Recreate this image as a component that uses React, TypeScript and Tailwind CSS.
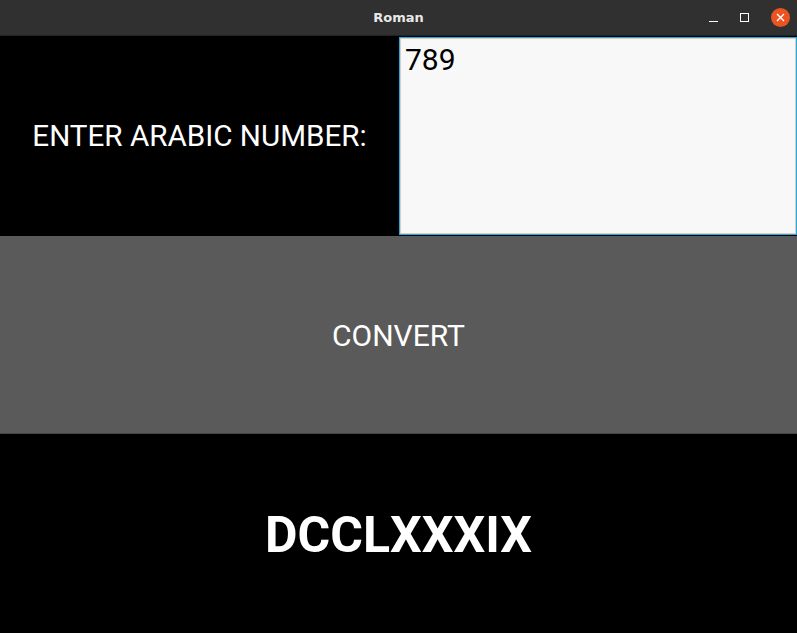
export default function App() {
  return (
    <div className="w-[797px] h-[633px] flex flex-col bg-black overflow-hidden" style={{ fontFamily: 'Roboto, "Liberation Sans", sans-serif' }}>
      {/* Title bar */}
      <div className="relative h-[36px] shrink-0 bg-[#303030] border-b border-[#222] flex items-center justify-center">
        <span className="text-[13px] font-bold text-[#e8e8e8]" style={{ fontFamily: '"DejaVu Sans", sans-serif' }}>Roman</span>
        <div className="absolute right-[7px] top-0 h-full flex items-center gap-[22px]">
          <div className="w-[9px] h-[1px] bg-white mt-[8px]"></div>
          <div className="w-[9px] h-[9px] border border-white"></div>
          <div className="w-[19px] h-[19px] rounded-full bg-[#e95420] flex items-center justify-center">
            <svg width="9" height="9" viewBox="0 0 9 9">
              <path d="M1 1 L8 8 M8 1 L1 8" stroke="white" strokeWidth="1.4" />
            </svg>
          </div>
        </div>
      </div>

      {/* Input row */}
      <div className="h-[200px] flex">
        <div className="w-[399px] flex items-center justify-center">
          <span className="text-[29.6px] text-white">ENTER ARABIC NUMBER:</span>
        </div>
        <div className="flex-1 my-[1px] border border-[#29a8d8] bg-[#f8f8f8]">
          <div className="h-full border border-[#d0d0d0] px-[4px] text-[30px] leading-[42px] text-black">789</div>
        </div>
      </div>

      {/* Convert button */}
      <div className="h-[198px] bg-[#5a5a5a] border-b border-[#444] flex items-center justify-center">
        <span className="text-[30px] text-white mt-[2px]">CONVERT</span>
      </div>

      {/* Result */}
      <div className="flex-1 flex items-center justify-center">
        <span className="text-[50px] font-bold text-white mt-[4px]">DCCLXXXIX</span>
      </div>
    </div>
  )
}
